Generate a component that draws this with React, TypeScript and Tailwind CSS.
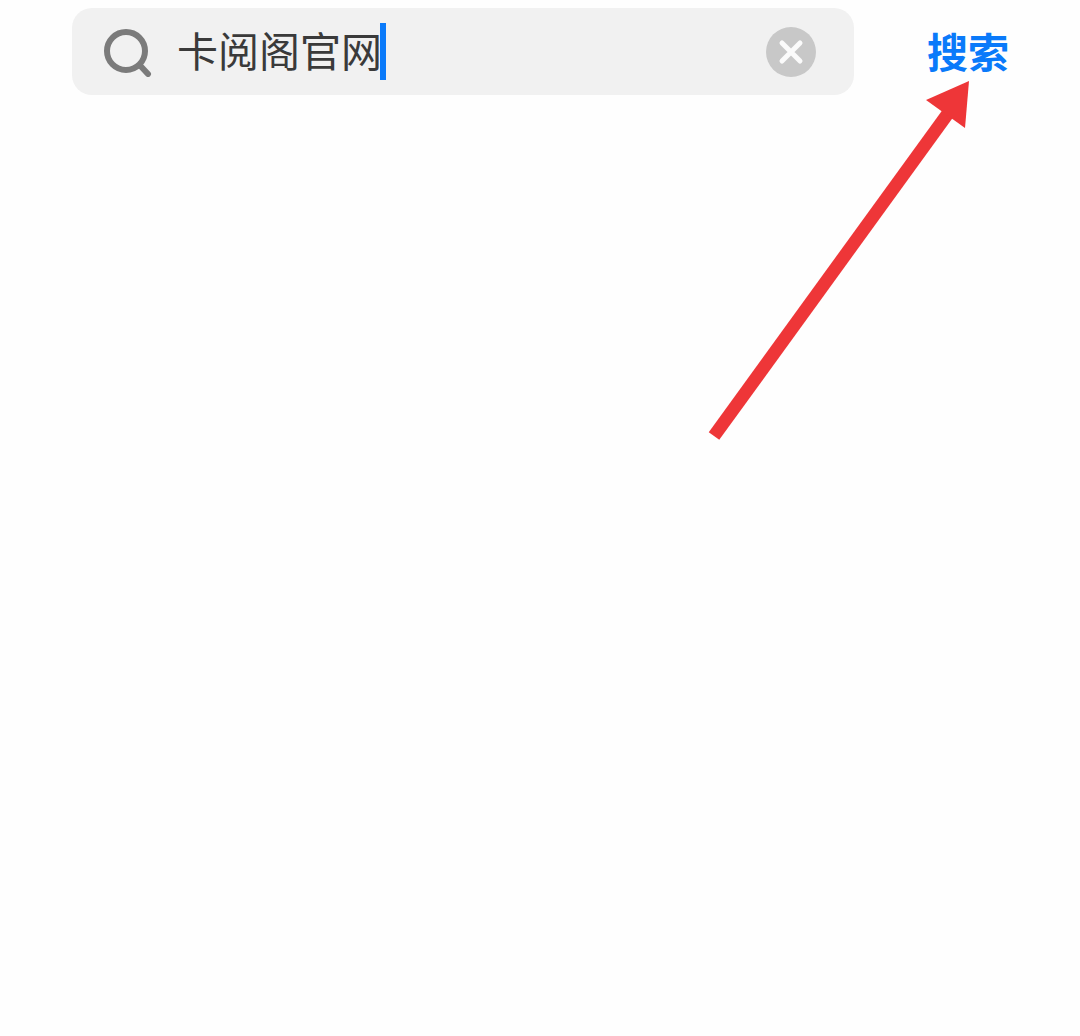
const cjk = "font-['Liberation_Sans','Noto_Sans_CJK_SC',sans-serif]";

function SearchIcon() {
  return (
    <svg width="50" height="50" viewBox="0 0 50 50" fill="none" className="shrink-0">
      <circle cx="24" cy="24" r="19" stroke="#7b7b7b" strokeWidth="6" />
      <path d="M39 39.5 L46 47" stroke="#7b7b7b" strokeWidth="6" strokeLinecap="round" />
    </svg>
  );
}

function ClearButton() {
  return (
    <div className="flex h-[50px] w-[50px] shrink-0 items-center justify-center rounded-full bg-[#c8c8c8]">
      <svg width="26" height="26" viewBox="0 0 26 26" fill="none">
        <path d="M4 4 L22 22 M22 4 L4 22" stroke="#fbfbfb" strokeWidth="5" strokeLinecap="round" />
      </svg>
    </div>
  );
}

function Arrow() {
  return (
    <svg width="1080" height="1036" viewBox="0 0 1080 1036" fill="none" className="absolute left-0 top-0">
      <path d="M714 436 L949 112" stroke="#ee3638" strokeWidth="13" />
      <path d="M969 81 L926 100 L965 128 Z" fill="#ee3638" />
    </svg>
  );
}

export default function App() {
  return (
    <div className={`relative h-[1036px] w-[1080px] overflow-hidden bg-[#fefefe] ${cjk}`}>
      <div className="flex items-start pl-[72px] pt-2">
        <div className="flex h-[87px] w-[782px] items-center rounded-[20px] bg-[#f1f1f1] pl-[30px] pr-[38px]">
          <SearchIcon />
          <div className="ml-[25px] flex flex-1 items-center">
            <span className="pt-[3px] text-[41px] leading-none text-[#3a3a3a]">卡阅阁官网</span>
            <span className="-ml-[2px] h-[57px] w-[6px] bg-[#0a7afa]" />
          </div>
          <ClearButton />
        </div>
        <div className="ml-[73px] flex h-[87px] items-center pt-[5px] text-[41px] font-bold leading-none text-[#0a7afa]">
          搜索
        </div>
      </div>
      <Arrow />
    </div>
  );
}
